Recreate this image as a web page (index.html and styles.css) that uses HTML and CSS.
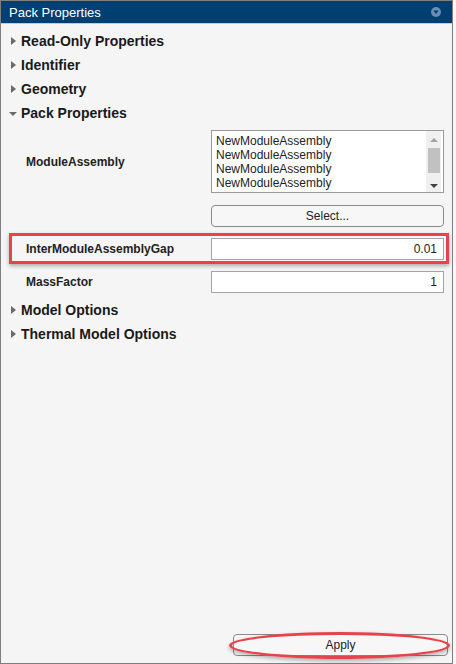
FILE: index.html
```
<!DOCTYPE html>
<html>
<head>
<meta charset="utf-8">
<link rel="stylesheet" href="styles.css">
</head>
<body>
<div class="panel">
  <div class="header">
    <span class="title">Pack Properties</span>
    <svg class="hicon" width="10" height="10" viewBox="0 0 10 10"><circle cx="5" cy="5" r="5" fill="#6b8db0"/><path d="M2.4 3.4 L7.6 3.4 L5 7 Z" fill="#003f72"/></svg>
  </div>
  <div class="content">
    <div class="section"><span class="tri-right"></span><span>Read-Only Properties</span></div>
    <div class="section"><span class="tri-right"></span><span>Identifier</span></div>
    <div class="section"><span class="tri-right"></span><span>Geometry</span></div>
    <div class="section"><span class="tri-down"></span><span>Pack Properties</span></div>

    <div class="prop prop-list">
      <div class="plabel">ModuleAssembly</div>
      <div class="listbox">
        <div class="items">
          <div>NewModuleAssembly</div>
          <div>NewModuleAssembly</div>
          <div>NewModuleAssembly</div>
          <div>NewModuleAssembly</div>
          <div>NewModuleAssembly</div>
        </div>
        <div class="scrollbar">
          <div class="sb-up"><span class="arrow-up"></span></div>
          <div class="sb-thumb"></div>
          <div class="sb-space"></div>
          <div class="sb-down"><span class="arrow-down"></span></div>
        </div>
      </div>
    </div>

    <div class="prop prop-btn">
      <div></div>
      <div class="btn">Select...</div>
    </div>

    <div class="prop prop-hl">
      <div class="plabel">InterModuleAssemblyGap</div>
      <div class="field">0.01</div>
      <span class="highlight"></span>
    </div>

    <div class="prop prop-mass">
      <div class="plabel">MassFactor</div>
      <div class="field">1</div>
    </div>

    <div class="section sec-model"><span class="tri-right"></span><span>Model Options</span></div>
    <div class="section"><span class="tri-right"></span><span>Thermal Model Options</span></div>
  </div>
  <div class="footer">
    <div class="btn apply">Apply</div>
    <span class="ring"></span>
  </div>
</div>
</body>
</html>
```
FILE: styles.css
```
html, body {
  margin: 0;
  padding: 0;
  background: #f7f7f7;
}
body {
  font-family: "Liberation Sans", Arial, sans-serif;
  color: #222;
}
.panel {
  width: 453px;
  height: 664px;
  box-sizing: border-box;
  border: 1px solid #7f7f7f;
  background: #f5f5f5;
  display: flex;
  flex-direction: column;
}
.header {
  height: 22px;
  background: #003f72;
  border-bottom: 1px solid #c9c9c9;
  display: flex;
  align-items: center;
  justify-content: space-between;
  padding: 0 11px 0 8px;
}
.title {
  color: #fff;
  font-size: 13px;
}
.hicon {
  display: block;
}
.content {
  flex: 1;
  padding-top: 5px;
  display: flex;
  flex-direction: column;
}
.section {
  height: 24px;
  display: flex;
  align-items: center;
  font-size: 14px;
  font-weight: bold;
  color: #1a1a1a;
}
.tri-right {
  width: 0;
  height: 0;
  margin-left: 10px;
  margin-right: 5px;
  border-left: 5px solid #6a6a6a;
  border-top: 4.5px solid transparent;
  border-bottom: 4.5px solid transparent;
}
.tri-down {
  width: 0;
  height: 0;
  margin-left: 8px;
  margin-right: 4px;
  margin-top: 1px;
  border-top: 4.5px solid #6a6a6a;
  border-left: 4.5px solid transparent;
  border-right: 4.5px solid transparent;
}
.prop {
  display: grid;
  grid-template-columns: 210px 233px;
  align-items: center;
  position: relative;
}
.plabel {
  padding-left: 25px;
  font-size: 12px;
  font-weight: bold;
  color: #222;
}
.prop-list {
  margin-top: 5px;
}
.listbox {
  height: 63px;
  box-sizing: border-box;
  border: 1px solid #9a9a9a;
  background: #fff;
  display: flex;
  overflow: hidden;
}
.items {
  flex: 1;
  padding: 3px 0 0 4px;
  font-size: 12px;
  line-height: 14px;
  color: #222;
  overflow: hidden;
}
.scrollbar {
  width: 15px;
  margin-right: 2px;
  background: #f0f0f0;
  display: flex;
  flex-direction: column;
  align-items: center;
}
.sb-up {
  height: 17px;
  display: flex;
  align-items: center;
  justify-content: center;
}
.sb-thumb {
  width: 12px;
  height: 25px;
  background: #c1c1c1;
}
.sb-space {
  flex: 1;
}
.sb-down {
  height: 13px;
  display: flex;
  align-items: center;
  justify-content: center;
}
.arrow-up {
  width: 0;
  height: 0;
  border-bottom: 4px solid #a3a3a3;
  border-left: 4px solid transparent;
  border-right: 4px solid transparent;
}
.arrow-down {
  width: 0;
  height: 0;
  border-top: 4px solid #404040;
  border-left: 4px solid transparent;
  border-right: 4px solid transparent;
}
.prop-btn {
  margin-top: 12px;
}
.btn {
  height: 22px;
  box-sizing: border-box;
  border: 1px solid #8a8a8a;
  border-radius: 4px;
  background: #f7f7f7;
  font-size: 12px;
  display: flex;
  align-items: center;
  justify-content: center;
  color: #222;
}
.prop-hl {
  margin-top: 11px;
}
.prop-mass {
  margin-top: 11px;
}
.field {
  height: 22px;
  box-sizing: border-box;
  border: 1px solid #a5a5a5;
  background: #fff;
  font-size: 12px;
  line-height: 20px;
  text-align: right;
  padding-right: 6px;
  color: #222;
}
.highlight {
  position: absolute;
  left: 8px;
  top: -5px;
  width: 440px;
  height: 31px;
  box-sizing: border-box;
  border: 3px solid #e8424a;
  box-shadow: 0 2px 4px rgba(0, 0, 0, 0.3);
  pointer-events: none;
}
.sec-model {
  margin-top: 5px;
}
.footer {
  position: relative;
  display: flex;
  padding: 0 0 7px 232px;
}
.apply {
  width: 215px;
}
.ring {
  position: absolute;
  left: 228px;
  top: -2px;
  width: 221px;
  height: 27px;
  box-sizing: border-box;
  border: 3px solid #e8424a;
  border-radius: 50%;
  box-shadow: 0 2px 4px rgba(0, 0, 0, 0.3);
  pointer-events: none;
}
```
